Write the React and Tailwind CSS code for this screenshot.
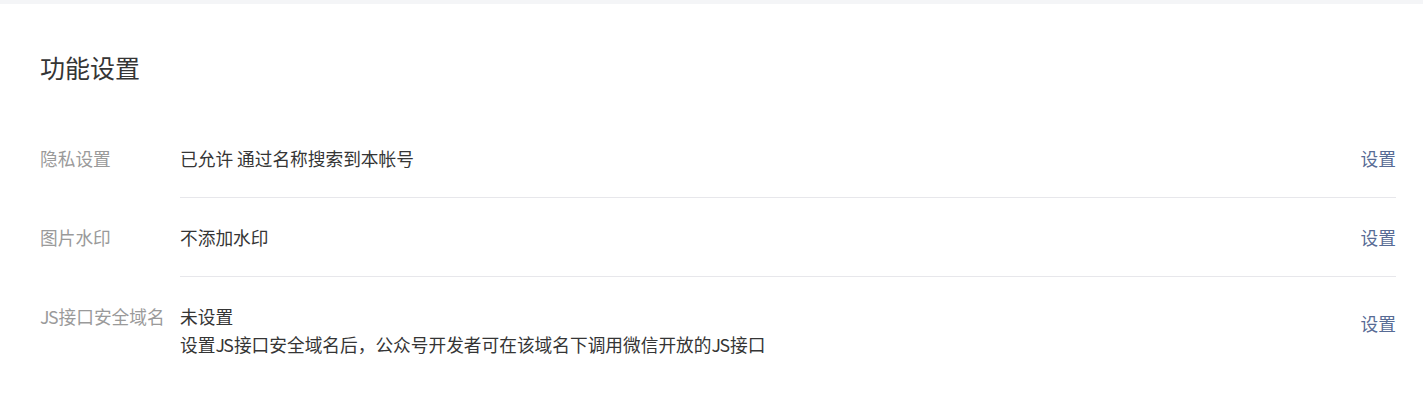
const JS = () => <span className="tracking-[-1.5px] mr-[1.5px]">JS</span>;

const rows = [
  { label: '隐私设置', lines: ['已允许 通过名称搜索到本帐号'] },
  { label: '图片水印', lines: ['不添加水印'] },
  {
    label: <><JS />接口安全域名</>,
    lines: [
      '未设置',
      <>设置<JS />接口安全域名后，公众号开发者可在该域名下调用微信开放的<JS />接口</>,
    ],
  },
];

const App = () => {
  return (
    <div
      className="min-h-screen bg-white text-[#353535]"
      style={{ fontFamily: '"Noto Sans CJK SC", "Noto Sans", sans-serif' }}
    >
      <div className="h-[4px] bg-[#f4f5f7]" />

      <div className="pl-[40px] pr-[27px]">
        {/* Title */}
        <h2 className="pt-[45px] text-[25px] leading-[36px] font-normal">功能设置</h2>

        {/* Settings list */}
        <div className="mt-[34px]">
          {rows.map((row, idx) => (
            <div key={idx} className="flex">
              <div className="w-[140px] shrink-0 py-[25px] text-[17.7px] leading-[28px] text-[#9a9a9a] whitespace-nowrap">
                {row.label}
              </div>
              <div
                className={`flex flex-1 items-center justify-between py-[25px] ${
                  idx < rows.length - 1 ? 'border-b border-[#e7e7eb]' : ''
                }`}
              >
                <div className="text-[17.7px] leading-[28px]">
                  {row.lines.map((line, i) => (
                    <p key={i}>{line}</p>
                  ))}
                </div>
                <a
                  href="#"
                  className={`text-[17.7px] leading-[28px] text-[#576b95] ${row.lines.length > 1 ? 'mb-[14px]' : ''}`}
                >
                  设置
                </a>
              </div>
            </div>
          ))}
        </div>
      </div>
    </div>
  );
};

export default App;
